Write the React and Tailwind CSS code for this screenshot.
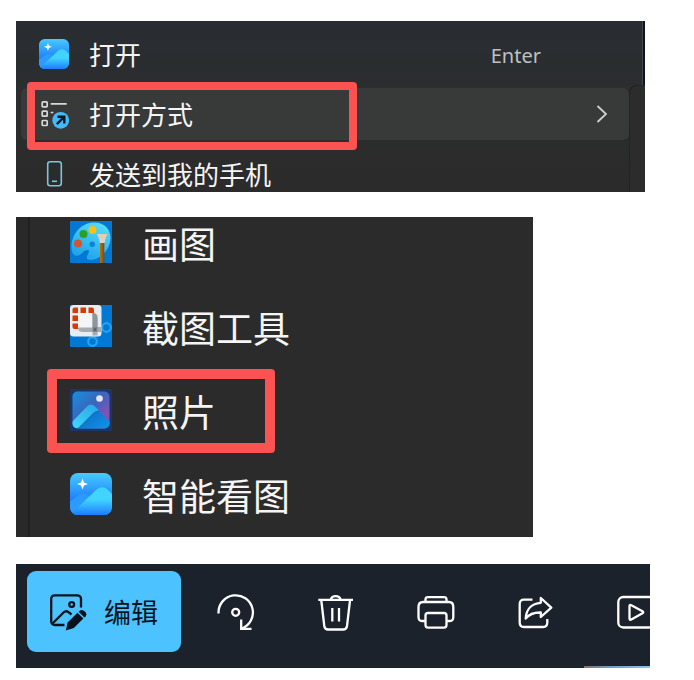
import React from "react";

const SmartViewIcon = ({ id, className }) => (
  <svg viewBox="0 0 42 42" className={className} aria-hidden="true">
    <defs>
      <linearGradient id={`${id}-bg`} x1="0" y1="0" x2="0" y2="1">
        <stop offset="0" stopColor="#48cbff" />
        <stop offset="0.6" stopColor="#1f83ff" />
        <stop offset="1" stopColor="#2388ff" />
      </linearGradient>
      <linearGradient id={`${id}-hill`} x1="0" y1="0" x2="0" y2="1">
        <stop offset="0.45" stopColor="#40d4ff" />
        <stop offset="1" stopColor="#1e7bff" />
      </linearGradient>
      <clipPath id={`${id}-clip`}>
        <rect width="42" height="42" rx="8" />
      </clipPath>
    </defs>
    <g clipPath={`url(#${id}-clip)`}>
      <rect width="42" height="42" fill={`url(#${id}-bg)`} />
      <path d="M0 29L7 23Q13 18 19 23L26 30V42H0Z" fill="#2b9bff" />
      <path
        d="M3 39L26 17Q31 12 37 16L42 21V42H0Z"
        fill={`url(#${id}-hill)`}
      />
      <path
        d="M12.5 5.5L14 9.5L18 11L14 12.5L12.5 16.5L11 12.5L7 11L11 9.5Z"
        fill="#fff"
      />
    </g>
  </svg>
);

const OpenWithIcon = () => (
  <svg viewBox="0 0 30 30" className="size-[30px]" aria-hidden="true">
    <g fill="none" stroke="#d8d8d8" strokeWidth="1.7">
      <rect x="3.2" y="2.9" width="5" height="5" rx="0.8" />
      <rect x="3.2" y="12.2" width="5" height="5" rx="0.8" />
      <rect x="3.2" y="21.5" width="5" height="5" rx="0.8" />
      <path d="M11.7 4.9H27.7M11.7 13.5H14.3" />
    </g>
    <circle cx="21.7" cy="21.3" r="8.4" fill="#45b8f7" />
    <path
      d="M17.8 25.2L25 18M18.5 17.7H25.3V24.5"
      fill="none"
      stroke="#0b1a22"
      strokeWidth="2.4"
    />
  </svg>
);

const PhoneIcon = () => (
  <svg viewBox="0 0 30 30" className="size-[30px]" fill="none" stroke="#7cc5dc" strokeWidth="1.6" aria-hidden="true">
    <rect x="8.7" y="2.7" width="13.6" height="24" rx="2.5" />
    <path d="M13 22.3H18" />
  </svg>
);

const PaintIcon = () => (
  <svg viewBox="0 0 42 42" className="size-[42px]" aria-hidden="true">
    <defs>
      <linearGradient id="palette" x1="0.7" y1="0" x2="0.2" y2="1">
        <stop offset="0" stopColor="#54dcfb" />
        <stop offset="1" stopColor="#1b9de8" />
      </linearGradient>
      <linearGradient id="handle" x1="0" y1="0" x2="1" y2="0">
        <stop offset="0" stopColor="#b9760f" />
        <stop offset="1" stopColor="#7b4708" />
      </linearGradient>
    </defs>
    <rect width="42" height="42" fill="#0078d4" />
    <path
      d="M25 1.5C12 1 2 12 1.5 25C1.2 32 4 36 8.5 34.5C12 33.5 14 28 18 29C21.5 30 14 36 18 38.5C25 41 39 33 40.5 18C41 8 34 1.8 25 1.5Z"
      fill="url(#palette)"
    />
    <circle cx="22.3" cy="23.3" r="2.7" fill="#0b82d6" />
    <circle cx="8" cy="22.5" r="4" fill="#d9532a" />
    <circle cx="13.5" cy="13" r="4" fill="#2f9e23" />
    <circle cx="22.5" cy="9" r="4" fill="#f6c20f" />
    <path d="M30 20H34.3V42H30Z" fill="url(#handle)" />
    <path d="M27 13H37.3L35.5 18L34.5 22H30L29 18Z" fill="#e3cdb4" />
    <path d="M29.5 18.5H35L34.5 22H30Z" fill="#d5d5d5" />
  </svg>
);

const SnipIcon = () => (
  <svg viewBox="0 0 42 42" className="size-[42px]" aria-hidden="true">
    <rect width="42" height="42" fill="#0078d4" />
    <g fill="none" stroke="#21a5ee" strokeWidth="2.2">
      <circle cx="36.5" cy="22.5" r="4.3" />
      <circle cx="22.5" cy="36.5" r="4.3" />
      <path d="M24 32.5L27 26L32.5 24" />
    </g>
    <rect width="31.5" height="31.5" rx="3.5" fill="#e9ecf1" />
    <rect x="8" y="8" width="16" height="16" fill="#f4f5f8" />
    <g fill="#d83b01">
      <path d="M4.5 2.5H8V8H2.5V4.5Q2.5 2.5 4.5 2.5Z" />
      <rect x="10.5" y="2.5" width="5.5" height="5.5" />
      <path d="M18.5 2.5H22Q24 2.5 24 4.5V8H18.5Z" />
      <rect x="2.5" y="10.5" width="5.5" height="5.5" />
      <path d="M2.5 18.5H8V24H4.5Q2.5 24 2.5 22Z" />
    </g>
    <path d="M22.5 8Q27.5 8 27.5 13V22H31V27H27.5V30.5H22.5V27H13Q8 27 8 22.5H22.5Z" fill="#a7acb3" />
    <path d="M22.5 8Q27.5 8 27.5 13V22H22.5Z" fill="#8f959d" />
    <rect x="22.5" y="22" width="5" height="5" fill="#7d848c" />
    <circle cx="25" cy="24.5" r="1.3" fill="#555c65" />
  </svg>
);

const PhotosIcon = () => (
  <svg viewBox="0 0 42 42" className="size-[42px]" aria-hidden="true">
    <defs>
      <linearGradient id="sky" x1="0" y1="0" x2="1" y2="1">
        <stop offset="0" stopColor="#1592dc" />
        <stop offset="0.45" stopColor="#3a65bd" />
        <stop offset="0.75" stopColor="#8054b6" />
      </linearGradient>
      <linearGradient id="slope" x1="1" y1="0" x2="0" y2="1">
        <stop offset="0" stopColor="#28a5e6" />
        <stop offset="1" stopColor="#43d8fb" />
      </linearGradient>
      <linearGradient id="ridge" x1="0" y1="0" x2="1" y2="1">
        <stop offset="0.1" stopColor="#0a63b8" />
        <stop offset="0.8" stopColor="#108ee4" />
      </linearGradient>
      <clipPath id="photo-clip">
        <rect x="2.5" y="2.5" width="37" height="37" rx="5" />
      </clipPath>
    </defs>
    <rect width="42" height="42" fill="#1a3668" />
    <g clipPath="url(#photo-clip)">
      <rect x="2" y="2" width="38" height="38" fill="url(#sky)" />
      <path d="M19 16L25 18L42 35V42H6Z" fill="url(#ridge)" />
      <path d="M1 34L16.5 18Q21 13.5 25 17.5L29 21.5Q26 21 23 24L9 38Q7 40 4 40H1Z" fill="url(#slope)" />
    </g>
    <circle cx="29.5" cy="9.5" r="3.3" fill="#e9e5f3" />
  </svg>
);

const EditIcon = () => (
  <svg viewBox="0 0 38 38" className="size-[38px]" fill="none" stroke="#06131c" strokeWidth="2.3" aria-hidden="true">
    <path d="M32 14.5V6Q32 2.4 28 2.4H6Q2.2 2.4 2.2 6V28Q2.2 32 6 32H15.5" />
    <path d="M3.5 30.5L14.5 19.5Q17 17.2 19.5 19.2L22.5 21.5" />
    <circle cx="22.7" cy="11.5" r="2.4" />
    <path d="M16.8 37.5L18.6 29.6L28.5 19.8L34.4 25.6L24.8 35Z" fill="#06131c" stroke="none" />
    <path d="M29.6 18.8L31.5 17.3Q33.5 16.3 36.2 18.8Q38.2 21 36.7 23.2L35.4 24.6Z" fill="#06131c" stroke="none" />
  </svg>
);

const Glyph = ({ children }) => (
  <svg viewBox="0 0 38 38" className="size-[38px]" fill="none" stroke="#fff" strokeWidth="2.3" strokeLinejoin="round" aria-hidden="true">
    {children}
  </svg>
);

const tools = [
  {
    label: "旋转",
    icon: (
      <Glyph>
        <path d="M1.5 20.5V19.5A17.2 17.2 0 1 1 25 35.5" />
        <path d="M24.2 26.5V35.8H34.5" strokeLinejoin="miter" />
        <circle cx="18.7" cy="19.3" r="3.5" />
      </Glyph>
    ),
  },
  {
    label: "删除",
    icon: (
      <Glyph>
        <path d="M1.3 6.8H36" />
        <path d="M13.8 6.3A5 4.3 0 0 1 23.5 6.3" />
        <path d="M4.3 7.5L7.3 33Q7.8 36.5 11 36.5H26.3Q29.5 36.5 30 33L33 7.5" />
        <path d="M15.3 15V28.5M22 15V28.5" />
      </Glyph>
    ),
  },
  {
    label: "打印",
    icon: (
      <Glyph>
        <path d="M8.5 9V6.5Q8.5 4.2 11 4.2H27Q29.5 4.2 29.5 6.5V9" />
        <path d="M8.5 28H5Q1.5 28 1.5 24V14Q1.5 9 6 9H32Q36.3 9 36.3 14V24Q36.3 28 33 28H29.5" />
        <rect x="8.5" y="20" width="21" height="14.6" rx="2.5" />
      </Glyph>
    ),
  },
  {
    label: "共享",
    icon: (
      <Glyph>
        <path d="M15.5 6.7H7Q2.7 6.7 2.7 11V29.5Q2.7 34 7 34H26Q30.3 34 30.3 29.5V26" />
        <path d="M23.8 5L34.3 14.7L23.8 24V19.5C16 19.2 12 21.5 8.7 25.5C9.2 16.5 14.5 10.3 23.8 9.8Z" />
      </Glyph>
    ),
  },
  {
    label: "幻灯片放映",
    icon: (
      <Glyph>
        <rect x="1.3" y="4" width="36" height="30.5" rx="5" />
        <path d="M12.5 13.3Q12.5 11.3 14.3 12.3L25.5 18.2Q27 19.2 25.5 20.3L14.3 26.5Q12.5 27.3 12.5 25.5Z" />
      </Glyph>
    ),
  },
];

const apps = [
  { name: "画图", icon: <PaintIcon /> },
  { name: "截图工具", icon: <SnipIcon /> },
  { name: "照片", icon: <PhotosIcon />, marked: true },
  { name: "智能看图", icon: <SmartViewIcon id="app" className="size-[42px]" /> },
];

const ContextMenu = () => (
  <section className="flex w-full max-w-[629px] overflow-hidden bg-linear-to-b from-[#292d33] via-[#2b2d2e] via-40% to-[#2b2b2b]">
    <div className="flex h-[171px] grow flex-col gap-2 pt-[7px] pl-[5px] text-[26px] leading-[30px] text-[#f5f5f5]">
      <button className="flex h-[52px] shrink-0 items-center gap-5 pr-[88px] pl-[18px] text-left">
        <SmartViewIcon id="menu" className="size-[30px]" />
        <span className="grow">打开</span>
        <span className="pt-1 font-['Noto_Sans',sans-serif] text-xl text-[#bfc0c1]">Enter</span>
      </button>
      <div className="relative">
        <button className="flex h-[52px] w-full items-center gap-5 rounded-md bg-[#383939] pr-5 pl-[18px] text-left">
          <OpenWithIcon />
          <span className="grow">打开方式</span>
          <svg viewBox="0 0 14 20" className="h-5 w-[14px]" fill="none" stroke="#cfcfcf" strokeWidth="1.8" aria-hidden="true">
            <path d="M2.5 2L11 10L2.5 18" />
          </svg>
        </button>
        <div className="pointer-events-none absolute -top-1.5 left-1.5 h-[68px] w-[330px] rounded border-8 border-[#fb5252]" />
      </div>
      <button className="flex h-[52px] shrink-0 items-center gap-5 pl-[18px] text-left">
        <PhoneIcon />
        <span>发送到我的手机</span>
      </button>
    </div>
    {/* edge of the submenu that opens to the right */}
    <div className="flex w-4 shrink-0 flex-col">
      <div className="ml-auto h-16 w-[3px] border-l border-[#43474b] bg-[#0d1520]" />
      <div className="grow rounded-tl-lg border-t border-l border-[#222323] bg-[#2c2c2c]" />
    </div>
  </section>
);

const AppList = () => (
  <section className="flex w-full max-w-[517px] bg-[#2b2b2b]">
    <div className="w-3.5 shrink-0 border-r-2 border-[#202020] bg-[#292929]" />
    <ul className="flex h-80 grow flex-col gap-[42px] pt-1 pl-10">
      {apps.map((app) => (
        <li key={app.name} className="relative h-[42px] shrink-0">
          <button className="flex h-[42px] items-center gap-[30px] text-[37px] leading-[42px] text-[#f5f5f5]">
            {app.icon}
            <span className="pt-0.5">{app.name}</span>
          </button>
          {app.marked && (
            <div className="pointer-events-none absolute -top-5 -left-[23px] h-[84px] w-[228px] rounded border-10 border-[#fb5252]" />
          )}
        </li>
      ))}
    </ul>
  </section>
);

const PhotoToolbar = () => (
  <section className="w-full max-w-[634px] overflow-hidden bg-[#1b222c]">
    <div className="flex h-[102px] pt-[7px] pl-[11px]">
      <button className="mr-[5px] flex h-[81px] w-[154px] shrink-0 items-center gap-[17px] rounded-[9px] bg-[#4cc2ff] pl-[22px] text-[27px] text-[#06131c]">
        <EditIcon />
        <span className="pt-0.5">编辑</span>
      </button>
      {tools.map((tool) => (
        <button key={tool.label} aria-label={tool.label} className="flex h-[81px] w-[100px] shrink-0 items-center justify-center">
          {tool.icon}
        </button>
      ))}
    </div>
    <div className="ml-auto h-0.5 w-[66px] bg-linear-to-r from-[#86705f] via-[#6f9dc0] via-40% to-[#8cc4e8]" />
  </section>
);

const App = () => {
  return (
    <main className="flex min-h-screen flex-col bg-white pt-[21px] pr-11 pb-3 pl-4 font-['Noto_Sans_CJK_SC',sans-serif]">
      <ContextMenu />
      <div className="pt-[25px]">
        <AppList />
      </div>
      <div className="pt-[27px]">
        <PhotoToolbar />
      </div>
    </main>
  );
};

export default App;
